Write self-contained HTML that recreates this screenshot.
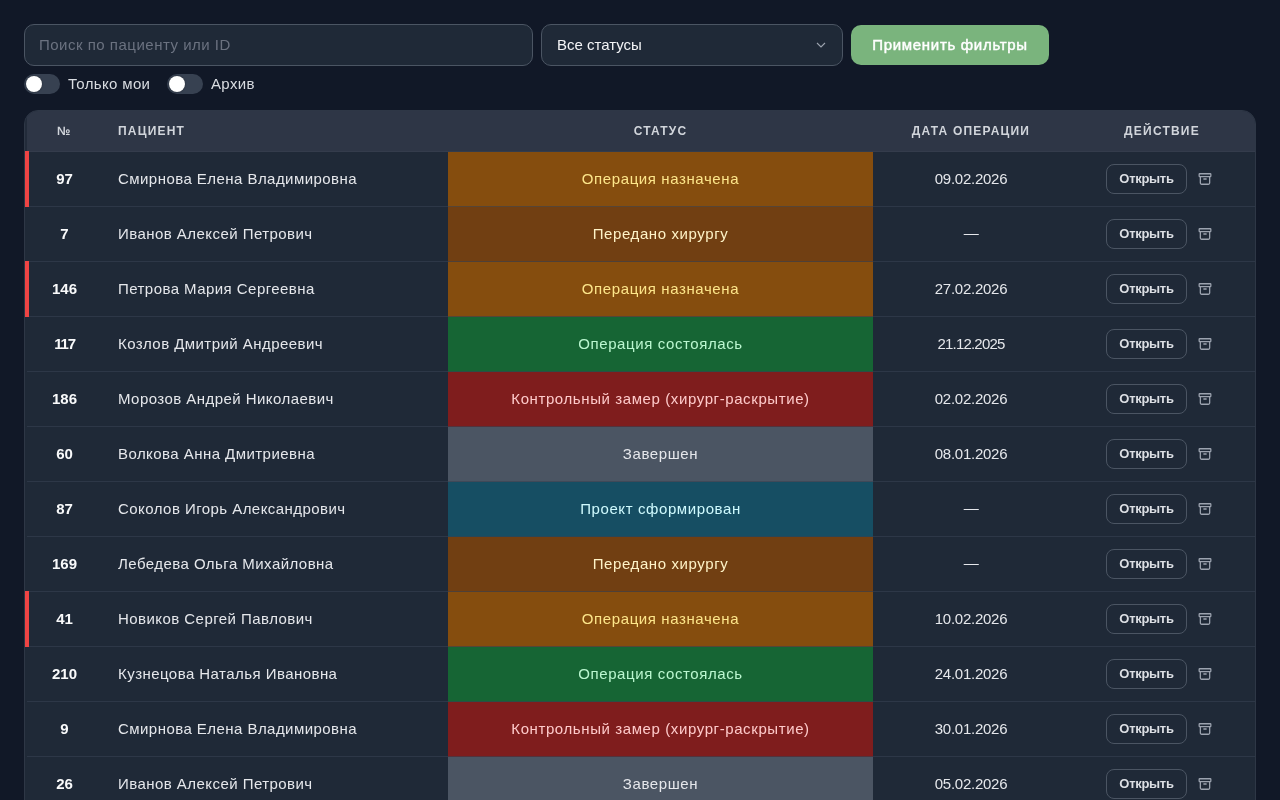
<!DOCTYPE html>
<html lang="ru">
<head>
<meta charset="utf-8">
<style>
*{box-sizing:border-box;margin:0;padding:0}
html,body{width:1280px;height:800px;overflow:hidden;background:#111827;font-family:"Liberation Sans",sans-serif;color:#e5e7eb}
.wrap{position:absolute;left:0;top:0;width:1280px;height:800px;will-change:transform;background:#111827}
.inp{position:absolute;top:24px;height:42px;background:#1f2937;border:1px solid #4b5563;border-radius:10px}
.search{left:24px;width:509px}
.search span{position:absolute;left:14px;top:10px;font-size:15px;color:#6b7280;line-height:20px;letter-spacing:0.5px}
.sel{left:541px;width:302px}
.sel span{position:absolute;left:15px;top:9.5px;font-size:15px;color:#f3f4f6;line-height:20px}
.sel svg{position:absolute;left:274px;top:16px}
.btn{position:absolute;left:851px;top:25px;width:198px;height:40px;background:#7ab47d;border-radius:10px;color:#fff;font-size:15px;font-weight:normal;-webkit-text-stroke:0.45px #fff;letter-spacing:0.7px;text-align:center;line-height:40px}
.tog{position:absolute;top:74px;width:36px;height:20px;border-radius:10px;background:#374151}
.tog i{position:absolute;left:2px;top:2px;width:16px;height:16px;border-radius:50%;background:#fff;box-shadow:0 0 1.5px rgba(0,0,0,.5)}
.tl{position:absolute;top:73.5px;line-height:20px;font-size:15px;color:#d9dce1;letter-spacing:0.35px}
.table{position:absolute;left:24px;top:110px;width:1232px;height:720px;border:1px solid #2e3746;border-radius:14px;overflow:hidden;background:#1f2937}
.head{position:absolute;left:0;top:0;width:1230px;height:41px;background:#2e3646;border-bottom:1px solid #343c4c}
.h{position:absolute;top:13px;font-size:12px;font-weight:bold;letter-spacing:1.2px;color:#d1d5db;line-height:14px;white-space:nowrap}
.row{position:absolute;left:0;width:1230px;height:55px}
.row::after{content:"";position:absolute;left:2px;right:0;top:54px;height:1px;background:rgba(55,65,81,.6)}
.bar{position:absolute;left:0;top:-1px;width:4px;height:56px;z-index:2;background:#ef4444}
.num{position:absolute;left:0;width:79px;text-align:center;top:18px;font-size:15px;font-weight:bold;color:#f9fafb;line-height:18px}
.name{position:absolute;left:93px;top:18px;font-size:15px;color:#e5e7eb;line-height:18px;white-space:nowrap;letter-spacing:0.45px}
.st{position:absolute;left:423px;top:0;width:425px;height:55px;text-align:center;font-size:15px;line-height:54px;letter-spacing:0.6px}
.date{position:absolute;left:848px;width:196px;text-align:center;top:18px;font-size:15px;color:#e5e7eb;line-height:18px;letter-spacing:-0.25px}
.dash{top:17px}
.ob{position:absolute;left:1081px;top:12px;width:81px;height:30px;border:1px solid #4b5563;border-radius:8px;font-size:13px;font-weight:bold;text-align:center;line-height:28px;color:#dcdfe4;letter-spacing:-0.3px}
.ic{position:absolute;left:1173px;top:20px}
.s1{background:#854d0e;color:#fde68a}
.s2{background:#713f12;color:#fef3c7}
.s3{background:#166534;color:#bbf7d0}
.s4{background:#7f1d1d;color:#fecaca}
.s5{background:#4b5563;color:#e5e7eb}
.s6{background:#164e63;color:#cffafe}
</style>
</head>
<body>
<div class="wrap">
<div class="inp search"><span>Поиск по пациенту или ID</span></div>
<div class="inp sel"><span>Все статусы</span><svg width="10" height="8" viewBox="0 0 10 8"><path d="M1 2l4 4 4-4" fill="none" stroke="#9ca3af" stroke-width="1.1"/></svg></div>
<div class="btn">Применить фильтры</div>
<div class="tog" style="left:24px"><i></i></div><div class="tl" style="left:68px">Только мои</div>
<div class="tog" style="left:167px"><i></i></div><div class="tl" style="left:211px">Архив</div>

<div class="table">
 <div class="head">
  <div style="position:absolute;left:0;top:0;width:2px;height:41px;background:#222b3a"></div>
  <div class="h" style="left:32px">№</div>
  <div class="h" style="left:93px">ПАЦИЕНТ</div>
  <div class="h" style="left:423px;width:425px;text-align:center">СТАТУС</div>
  <div class="h" style="left:848px;width:196px;text-align:center">ДАТА ОПЕРАЦИИ</div>
  <div class="h" style="left:1044px;width:186px;text-align:center">ДЕЙСТВИЕ</div>
 </div>
 <div id="rows">
<div class="row" style="top:41px"><div class="bar"></div><div class="num">97</div><div class="name">Смирнова Елена Владимировна</div><div class="st s1">Операция назначена</div><div class="date">09.02.2026</div><div class="ob">Открыть</div><svg class="ic" width="14" height="14" viewBox="0 0 24 24" fill="none" stroke="#9ca3af" stroke-width="2.2" stroke-linecap="round" stroke-linejoin="round"><rect x="2" y="3" width="20" height="5" rx="1"/><path d="M4 8v11a2 2 0 0 0 2 2h12a2 2 0 0 0 2-2V8"/><path d="M10 12h4"/></svg></div>
<div class="row" style="top:96px"><div class="num">7</div><div class="name">Иванов Алексей Петрович</div><div class="st s2">Передано хирургу</div><div class="date dash">—</div><div class="ob">Открыть</div><svg class="ic" width="14" height="14" viewBox="0 0 24 24" fill="none" stroke="#9ca3af" stroke-width="2.2" stroke-linecap="round" stroke-linejoin="round"><rect x="2" y="3" width="20" height="5" rx="1"/><path d="M4 8v11a2 2 0 0 0 2 2h12a2 2 0 0 0 2-2V8"/><path d="M10 12h4"/></svg></div>
<div class="row" style="top:151px"><div class="bar"></div><div class="num">146</div><div class="name">Петрова Мария Сергеевна</div><div class="st s1">Операция назначена</div><div class="date">27.02.2026</div><div class="ob">Открыть</div><svg class="ic" width="14" height="14" viewBox="0 0 24 24" fill="none" stroke="#9ca3af" stroke-width="2.2" stroke-linecap="round" stroke-linejoin="round"><rect x="2" y="3" width="20" height="5" rx="1"/><path d="M4 8v11a2 2 0 0 0 2 2h12a2 2 0 0 0 2-2V8"/><path d="M10 12h4"/></svg></div>
<div class="row" style="top:206px"><div class="num" style="letter-spacing:-1.2px">117</div><div class="name">Козлов Дмитрий Андреевич</div><div class="st s3">Операция состоялась</div><div class="date" style="letter-spacing:-0.8px">21.12.2025</div><div class="ob">Открыть</div><svg class="ic" width="14" height="14" viewBox="0 0 24 24" fill="none" stroke="#9ca3af" stroke-width="2.2" stroke-linecap="round" stroke-linejoin="round"><rect x="2" y="3" width="20" height="5" rx="1"/><path d="M4 8v11a2 2 0 0 0 2 2h12a2 2 0 0 0 2-2V8"/><path d="M10 12h4"/></svg></div>
<div class="row" style="top:261px"><div class="num">186</div><div class="name">Морозов Андрей Николаевич</div><div class="st s4">Контрольный замер (хирург-раскрытие)</div><div class="date">02.02.2026</div><div class="ob">Открыть</div><svg class="ic" width="14" height="14" viewBox="0 0 24 24" fill="none" stroke="#9ca3af" stroke-width="2.2" stroke-linecap="round" stroke-linejoin="round"><rect x="2" y="3" width="20" height="5" rx="1"/><path d="M4 8v11a2 2 0 0 0 2 2h12a2 2 0 0 0 2-2V8"/><path d="M10 12h4"/></svg></div>
<div class="row" style="top:316px"><div class="num">60</div><div class="name">Волкова Анна Дмитриевна</div><div class="st s5">Завершен</div><div class="date">08.01.2026</div><div class="ob">Открыть</div><svg class="ic" width="14" height="14" viewBox="0 0 24 24" fill="none" stroke="#9ca3af" stroke-width="2.2" stroke-linecap="round" stroke-linejoin="round"><rect x="2" y="3" width="20" height="5" rx="1"/><path d="M4 8v11a2 2 0 0 0 2 2h12a2 2 0 0 0 2-2V8"/><path d="M10 12h4"/></svg></div>
<div class="row" style="top:371px"><div class="num">87</div><div class="name">Соколов Игорь Александрович</div><div class="st s6">Проект сформирован</div><div class="date dash">—</div><div class="ob">Открыть</div><svg class="ic" width="14" height="14" viewBox="0 0 24 24" fill="none" stroke="#9ca3af" stroke-width="2.2" stroke-linecap="round" stroke-linejoin="round"><rect x="2" y="3" width="20" height="5" rx="1"/><path d="M4 8v11a2 2 0 0 0 2 2h12a2 2 0 0 0 2-2V8"/><path d="M10 12h4"/></svg></div>
<div class="row" style="top:426px"><div class="num">169</div><div class="name">Лебедева Ольга Михайловна</div><div class="st s2">Передано хирургу</div><div class="date dash">—</div><div class="ob">Открыть</div><svg class="ic" width="14" height="14" viewBox="0 0 24 24" fill="none" stroke="#9ca3af" stroke-width="2.2" stroke-linecap="round" stroke-linejoin="round"><rect x="2" y="3" width="20" height="5" rx="1"/><path d="M4 8v11a2 2 0 0 0 2 2h12a2 2 0 0 0 2-2V8"/><path d="M10 12h4"/></svg></div>
<div class="row" style="top:481px"><div class="bar"></div><div class="num">41</div><div class="name">Новиков Сергей Павлович</div><div class="st s1">Операция назначена</div><div class="date">10.02.2026</div><div class="ob">Открыть</div><svg class="ic" width="14" height="14" viewBox="0 0 24 24" fill="none" stroke="#9ca3af" stroke-width="2.2" stroke-linecap="round" stroke-linejoin="round"><rect x="2" y="3" width="20" height="5" rx="1"/><path d="M4 8v11a2 2 0 0 0 2 2h12a2 2 0 0 0 2-2V8"/><path d="M10 12h4"/></svg></div>
<div class="row" style="top:536px"><div class="num">210</div><div class="name">Кузнецова Наталья Ивановна</div><div class="st s3">Операция состоялась</div><div class="date">24.01.2026</div><div class="ob">Открыть</div><svg class="ic" width="14" height="14" viewBox="0 0 24 24" fill="none" stroke="#9ca3af" stroke-width="2.2" stroke-linecap="round" stroke-linejoin="round"><rect x="2" y="3" width="20" height="5" rx="1"/><path d="M4 8v11a2 2 0 0 0 2 2h12a2 2 0 0 0 2-2V8"/><path d="M10 12h4"/></svg></div>
<div class="row" style="top:591px"><div class="num">9</div><div class="name">Смирнова Елена Владимировна</div><div class="st s4">Контрольный замер (хирург-раскрытие)</div><div class="date">30.01.2026</div><div class="ob">Открыть</div><svg class="ic" width="14" height="14" viewBox="0 0 24 24" fill="none" stroke="#9ca3af" stroke-width="2.2" stroke-linecap="round" stroke-linejoin="round"><rect x="2" y="3" width="20" height="5" rx="1"/><path d="M4 8v11a2 2 0 0 0 2 2h12a2 2 0 0 0 2-2V8"/><path d="M10 12h4"/></svg></div>
<div class="row" style="top:646px"><div class="num">26</div><div class="name">Иванов Алексей Петрович</div><div class="st s5">Завершен</div><div class="date">05.02.2026</div><div class="ob">Открыть</div><svg class="ic" width="14" height="14" viewBox="0 0 24 24" fill="none" stroke="#9ca3af" stroke-width="2.2" stroke-linecap="round" stroke-linejoin="round"><rect x="2" y="3" width="20" height="5" rx="1"/><path d="M4 8v11a2 2 0 0 0 2 2h12a2 2 0 0 0 2-2V8"/><path d="M10 12h4"/></svg></div>
</div>
</div>
</div>
</body>
</html>
